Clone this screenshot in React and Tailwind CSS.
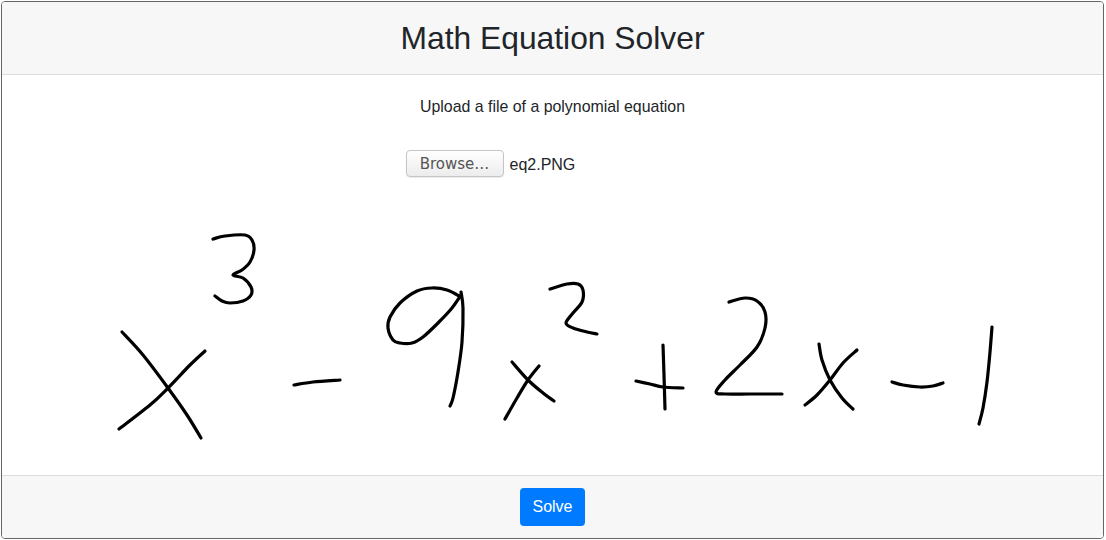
const strokes = [
  // x
  [[122, 332], [143, 355], [168, 388], [187, 415], [201, 438]],
  [[205, 351], [190, 365], [168, 388], [150, 405], [119, 429]],
  // superscript 3
  [[213, 239], [225, 236], [245, 235], [252, 240], [254, 250], [250, 262], [242, 270], [233, 275], [243, 278], [251, 287], [251, 295], [243, 301], [230, 303], [222, 301], [215, 296]],
  // minus
  [[294, 385], [313, 382], [340, 380]],
  // 9
  [[461, 297], [447, 290], [432, 288], [417, 291], [400, 303], [390, 317], [388, 328], [393, 340], [400, 343], [412, 343], [423, 337], [438, 323], [452, 308], [461, 295]],
  [[461, 292], [463, 308], [462, 342], [458, 372], [453, 398], [450, 406]],
  // x
  [[512, 362], [528, 380], [543, 393], [554, 401]],
  [[539, 366], [528, 380], [517, 398], [505, 419]],
  // superscript 2
  [[550, 289], [567, 284], [578, 284], [583, 290], [582, 302], [573, 313], [566, 323], [573, 328], [587, 332], [597, 334]],
  // plus
  [[636, 381], [650, 384], [663, 387], [683, 388]],
  [[663, 345], [664, 375], [665, 409]],
  // 2
  [[729, 302], [745, 298], [757, 301], [765, 312], [765, 328], [757, 347], [740, 365], [725, 380], [716, 392], [725, 394], [750, 394], [782, 394]],
  // x
  [[819, 344], [822, 360], [830, 380], [842, 398], [853, 409]],
  [[857, 350], [843, 363], [830, 380], [817, 395], [805, 405]],
  // minus
  [[892, 382], [903, 385], [920, 387], [933, 386], [943, 383]],
  // 1
  [[992, 327], [990, 352], [987, 382], [983, 408], [979, 424]],
];

// catmull-rom through the sampled points so the handwriting stays smooth
function toPath(pts) {
  let d = `M${pts[0][0]} ${pts[0][1]}`;
  for (let i = 0; i < pts.length - 1; i++) {
    const p0 = pts[i - 1] || pts[i];
    const p1 = pts[i];
    const p2 = pts[i + 1];
    const p3 = pts[i + 2] || p2;
    const c1x = p1[0] + (p2[0] - p0[0]) / 6;
    const c1y = p1[1] + (p2[1] - p0[1]) / 6;
    const c2x = p2[0] - (p3[0] - p1[0]) / 6;
    const c2y = p2[1] - (p3[1] - p1[1]) / 6;
    d += ` C${c1x} ${c1y} ${c2x} ${c2y} ${p2[0]} ${p2[1]}`;
  }
  return d;
}

export default function App() {
  return (
    <div className="h-[540px] w-[1106px] bg-white pt-px pb-px pl-px pr-[2px] font-['Liberation_Sans',Arial,sans-serif] text-[#212529]">
      <div className="flex h-full flex-col overflow-hidden rounded border border-[#62666a]">
        <div className="flex h-[73px] shrink-0 items-center justify-center border-b border-[#dcdcdc] bg-[#f7f7f7]">
          <h2 className="text-[31.8px] leading-[38px]">Math Equation Solver</h2>
        </div>

        <div className="flex h-[400px] shrink-0 flex-col">
          <p className="pt-5 text-center text-[15.9px] leading-6">Upload a file of a polynomial equation</p>
          <div className="mx-auto mt-[31px] flex w-[294px] items-center">
            <button className="h-[27px] w-[98px] rounded border border-[#c4c4c4] bg-gradient-to-b from-white to-[#ececec] pt-0.5 font-['DejaVu_Sans',sans-serif] text-[15px] leading-none text-[#555] shadow-[0_1px_1px_rgba(0,0,0,0.08)]">
              Browse…
            </button>
            <span className="ml-1.5 pt-0.5 text-base leading-6">eq2.PNG</span>
          </div>
          <svg className="mt-[13px] block shrink-0" viewBox="2 190 1102 285" width="1102" height="285">
            {strokes.map((s, i) => (
              <path key={i} d={toPath(s)} fill="none" stroke="#000" strokeWidth="3.2" strokeLinecap="round" strokeLinejoin="round" />
            ))}
          </svg>
        </div>

        <div className="flex flex-1 justify-center border-t border-[#dcdcdc] bg-[#f7f7f7] pt-3">
          <button className="h-[38px] w-[65.5px] rounded bg-[#007bff] text-base text-white">Solve</button>
        </div>
      </div>
    </div>
  );
}
